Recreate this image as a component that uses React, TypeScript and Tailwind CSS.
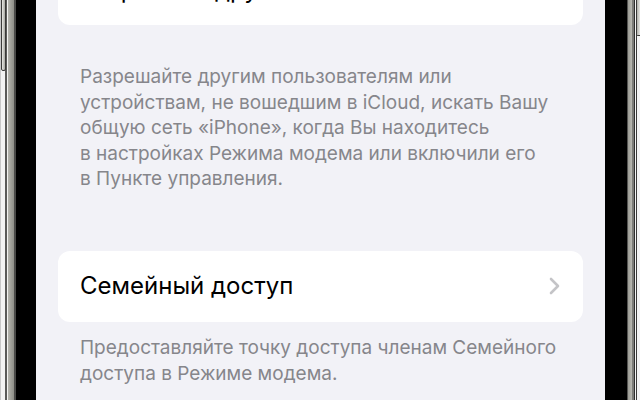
import React from 'react';

const LeftBezel = () => (
  <div className="relative flex h-full shrink-0">
    <div className="w-[5px] bg-[#f3f3f3] border-l border-[#c8c8c8]" />
    <div className="w-[2px] bg-[#5a5a58]" />
    <div className="w-[1px] bg-[#f2f2f0]" />
    <div className="w-[6px] bg-gradient-to-r from-[#b5b5ae] to-[#8f8f88]" />
    <div className="w-[2px] bg-[#4a4a48]" />
    <div className="w-[20px] bg-black" />
    {/* side button */}
    <div className="absolute left-[1px] top-[-10px] h-[81px] w-[5px] rounded-b-[2px] border border-[#3a3a38] bg-gradient-to-r from-[#e8e8e4] to-[#a8a8a2]" />
  </div>
);

const RightBezel = () => (
  <div className="relative flex h-full shrink-0">
    <div className="w-[22px] bg-black" />
    <div className="w-[1px] bg-[#555553]" />
    <div className="w-[4px] bg-gradient-to-r from-[#9c9c95] to-[#b8b8b1]" />
    <div className="w-[2px] bg-[#7c7c78]" />
    <div className="w-[1px] bg-[#2f2f2e]" />
    <div className="w-[1px] bg-[#f4f4f4]" />
    <div className="w-[1px] bg-[#3a3a38]" />
    <div className="w-[3px] bg-[#f3f3f3]" />
    <div className="absolute right-0 top-[-10px] h-[46px] w-[4px] rounded-bl-[2px] border border-r-0 border-[#3a3a38] bg-gradient-to-r from-[#b0b0aa] to-[#e6e6e2]" />
  </div>
);

const Chevron = () => (
  <svg width="13" height="20" viewBox="0 0 13 20" fill="none">
    <path d="M3 3L10 10L3 17" stroke="#c4c4c7" strokeWidth="2.6" strokeLinecap="round" strokeLinejoin="round" />
  </svg>
);

export default function App() {
  return (
    <div className="flex h-[400px] w-[640px] overflow-hidden bg-[#f3f3f3] font-['Inter','Liberation_Sans',sans-serif] antialiased">
      <LeftBezel />

      <main className="flex h-full flex-1 flex-col bg-[#f2f2f7] px-[22px]">
        {/* upper row, mostly out of view */}
        <div className="mt-[-45px] flex h-[70px] shrink-0 items-center justify-between rounded-[12px] bg-white px-[22px]">
          <span className="text-[24px] text-black">Разрешить другим</span>
          <span className="mr-[30px] text-[24px] text-[#8a8a8e]">Вкл.</span>
        </div>

        <p className="mt-[39px] px-[22px] text-[19px] leading-[25.6px] text-[#86868b]">
          Разрешайте другим пользователям или
          <br />
          устройствам, не вошедшим в iCloud, искать Вашу
          <br />
          общую сеть «iPhone», когда Вы находитесь
          <br />
          в настройках Режима модема или включили его
          <br />
          в Пункте управления.
        </p>

        <div className="mt-[59px] flex h-[71px] shrink-0 items-center justify-between rounded-[12px] bg-white pl-[22px] pr-[22px]">
          <span className="text-[24px] text-black">Семейный доступ</span>
          <Chevron />
        </div>

        <p className="mt-[13px] px-[22px] text-[19px] leading-[25.6px] text-[#86868b]">
          Предоставляйте точку доступа членам Семейного
          <br />
          доступа в Режиме модема.
        </p>
      </main>

      <RightBezel />
    </div>
  );
}
